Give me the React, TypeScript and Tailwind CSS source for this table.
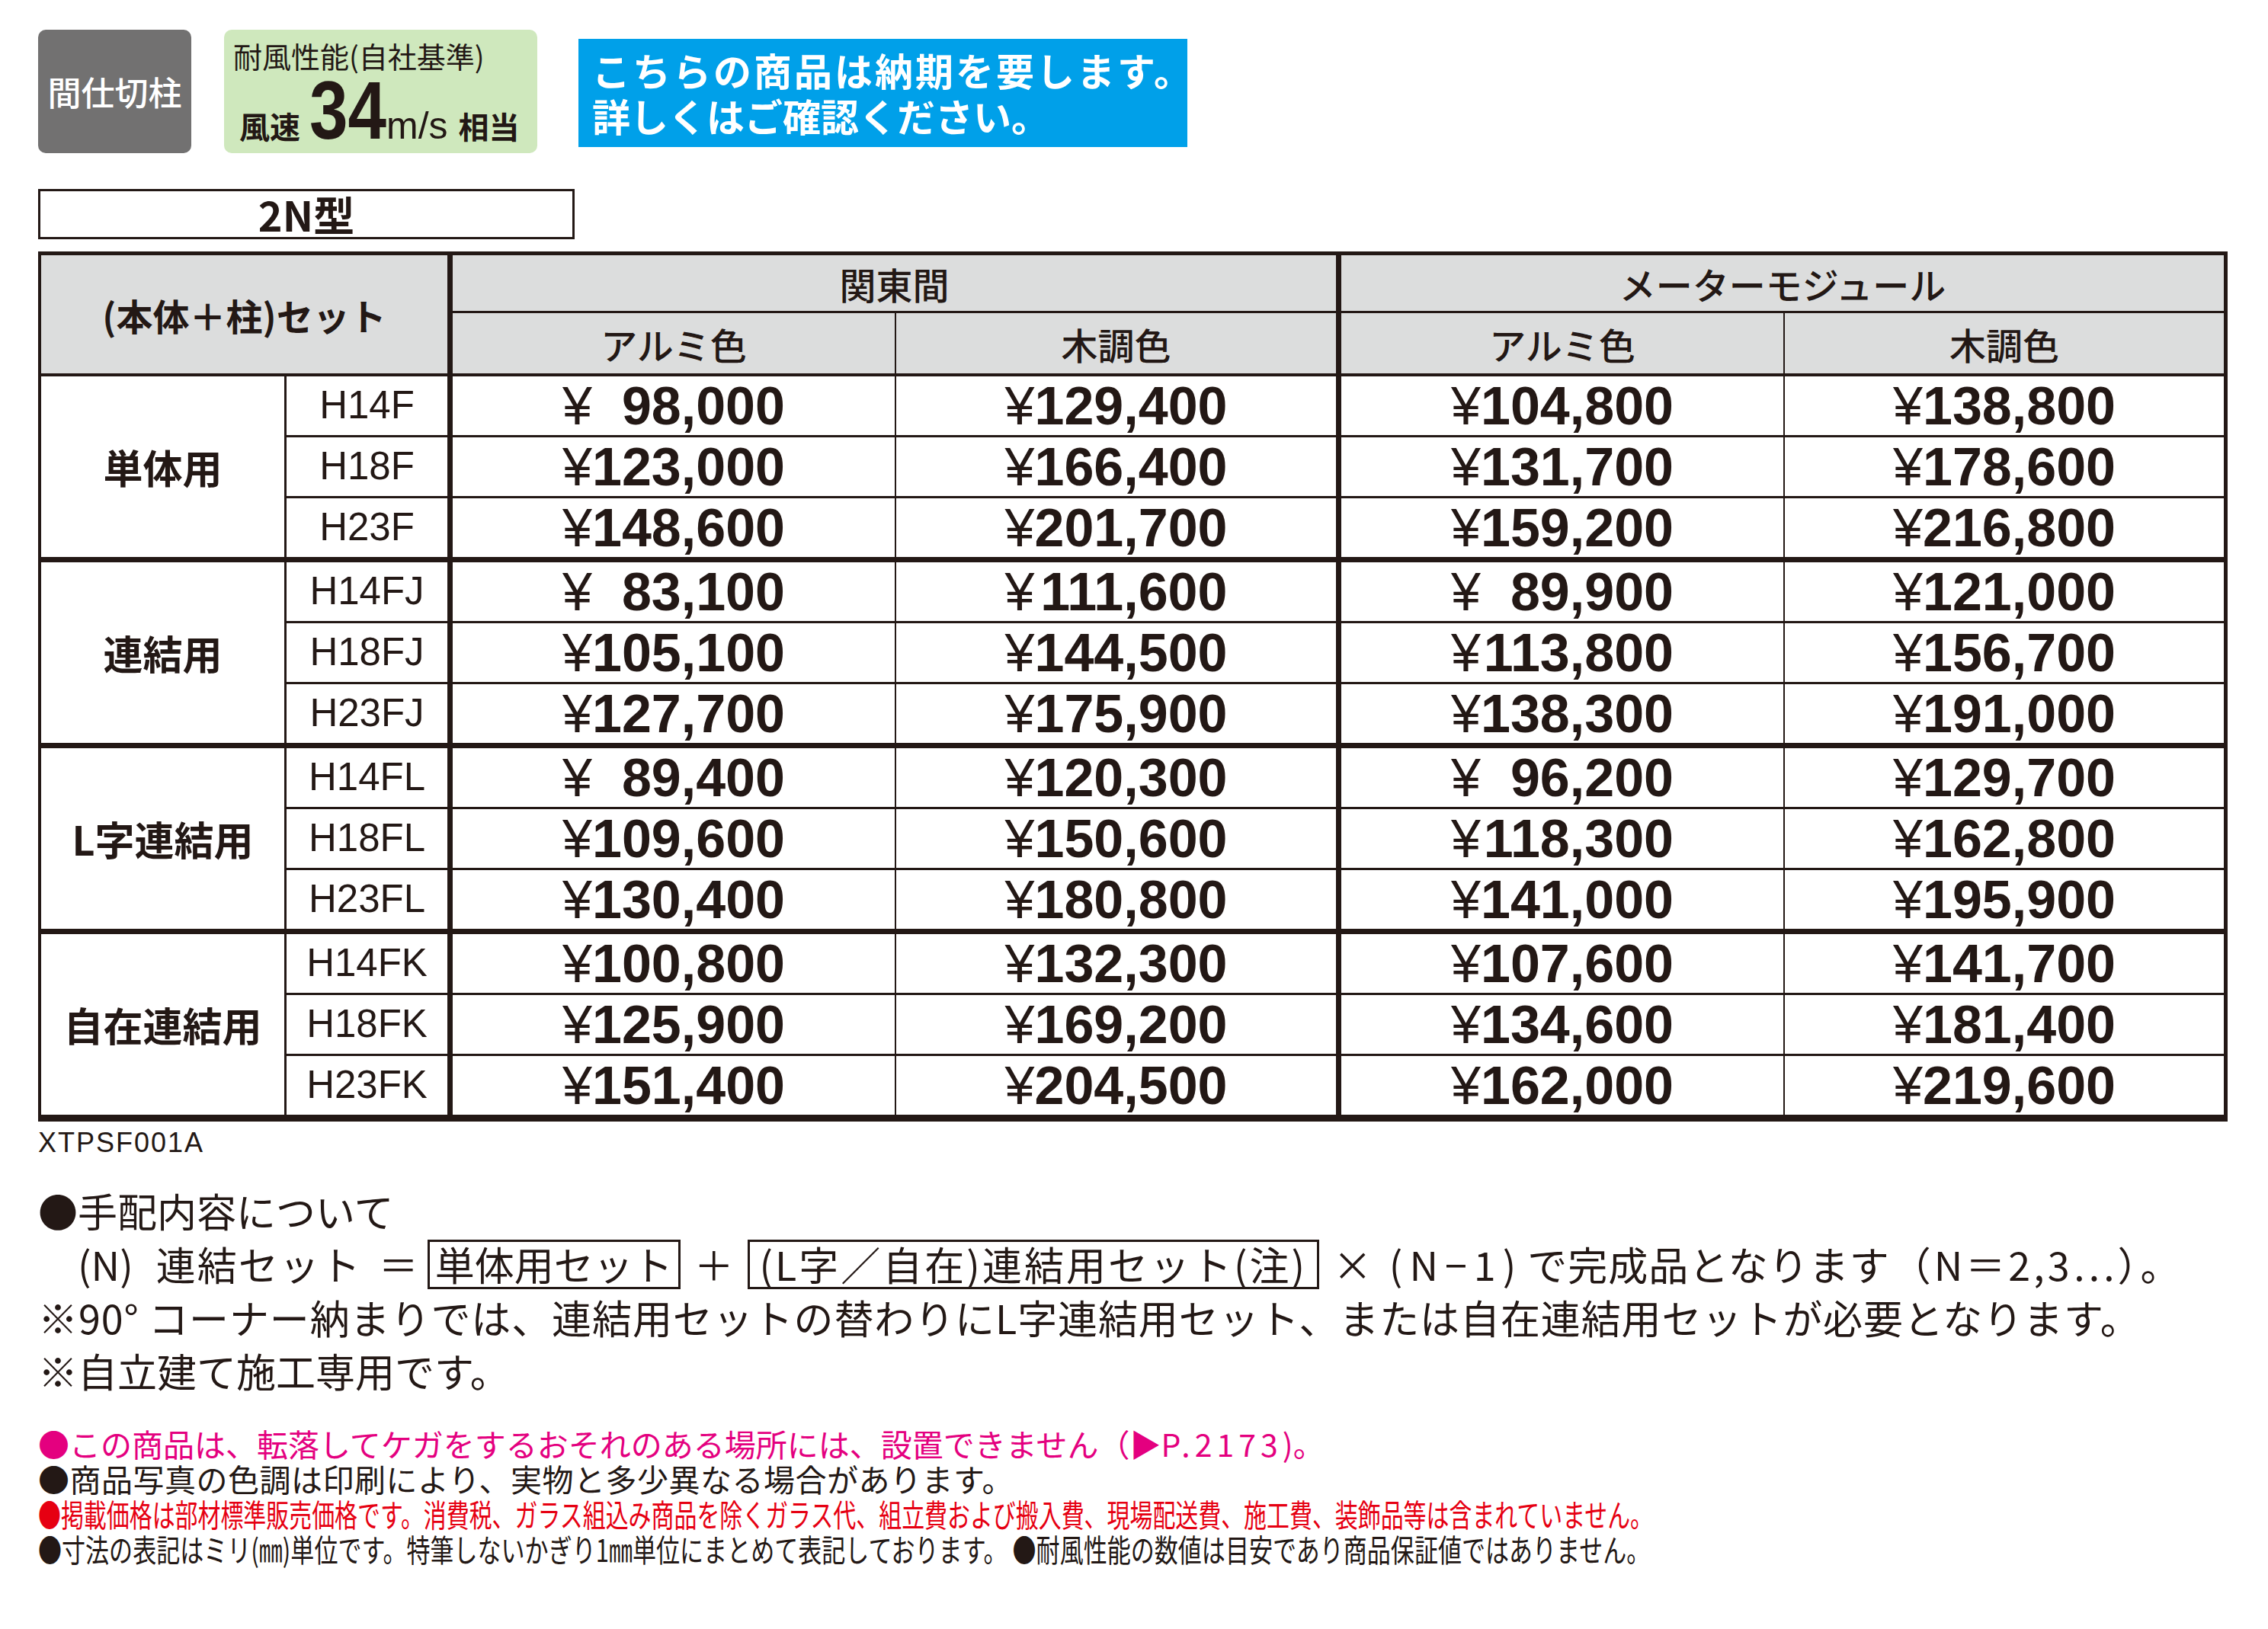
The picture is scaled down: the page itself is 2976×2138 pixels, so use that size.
import React from "react";

const groups = [
  {
    label: "単体用",
    rows: [
      ["H14F", "98,000", "129,400", "104,800", "138,800"],
      ["H18F", "123,000", "166,400", "131,700", "178,600"],
      ["H23F", "148,600", "201,700", "159,200", "216,800"],
    ],
  },
  {
    label: "連結用",
    rows: [
      ["H14FJ", "83,100", "111,600", "89,900", "121,000"],
      ["H18FJ", "105,100", "144,500", "113,800", "156,700"],
      ["H23FJ", "127,700", "175,900", "138,300", "191,000"],
    ],
  },
  {
    label: "L字連結用",
    rows: [
      ["H14FL", "89,400", "120,300", "96,200", "129,700"],
      ["H18FL", "109,600", "150,600", "118,300", "162,800"],
      ["H23FL", "130,400", "180,800", "141,000", "195,900"],
    ],
  },
  {
    label: "自在連結用",
    rows: [
      ["H14FK", "100,800", "132,300", "107,600", "141,700"],
      ["H18FK", "125,900", "169,200", "134,600", "181,400"],
      ["H23FK", "151,400", "204,500", "162,000", "219,600"],
    ],
  },
];

const priceRight = ["border-r-2", "border-r-[7px]", "border-r-2", "border-r-0"];
const cell = "border-solid border-[#231815] p-0 align-middle text-center";

function Price({ v }: { v: string }) {
  return (
    <div className="flex justify-center">
      <div className="flex items-baseline font-['Liberation_Sans',sans-serif] text-[70px] leading-none">
        <span className="font-normal">¥</span>
        <span className="w-[253px] text-right font-bold">{v}</span>
      </div>
    </div>
  );
}

function PriceTable() {
  return (
    <table className="mt-[16px] w-[2873px] table-fixed border-separate border-spacing-0 border-t-[5px] border-l-4 border-r-[5px] border-b-[9px] border-solid border-[#231815]">
      <colgroup>
        <col className="w-[322px]" />
        <col className="w-[218px]" />
        <col className="w-[582px]" />
        <col className="w-[584px]" />
        <col className="w-[582px]" />
        <col className="w-[576px]" />
      </colgroup>
      <thead>
        <tr className="h-[76px]">
          <th
            rowSpan={2}
            colSpan={2}
            className={`${cell} bg-[#dcdddd] border-r-[7px] border-b-4 text-[48px] font-bold`}
          >
            (本体＋柱)セット
          </th>
          <th colSpan={2} className={`${cell} bg-[#dcdddd] border-r-[7px] border-b-[3px] text-[48px] font-medium`}>
            関東間
          </th>
          <th colSpan={2} className={`${cell} bg-[#dcdddd] border-b-[3px] text-[48px] font-medium`}>
            メーターモジュール
          </th>
        </tr>
        <tr className="h-[83px]">
          <th className={`${cell} bg-[#dcdddd] border-r-2 border-b-4 text-[48px] font-medium`}>アルミ色</th>
          <th className={`${cell} bg-[#dcdddd] border-r-[7px] border-b-4 text-[48px] font-medium`}>木調色</th>
          <th className={`${cell} bg-[#dcdddd] border-r-2 border-b-4 text-[48px] font-medium`}>アルミ色</th>
          <th className={`${cell} bg-[#dcdddd] border-b-4 text-[48px] font-medium`}>木調色</th>
        </tr>
      </thead>
      <tbody>
        {groups.map((g, gi) =>
          g.rows.map((r, ri) => {
            const last = gi === groups.length - 1;
            const bottom =
              ri < 2 ? "border-b-[3px]" : last ? "border-b-0" : "border-b-[7px]";
            const height = ri < 2 ? "h-[80px]" : last ? "h-[77px]" : "h-[84px]";
            return (
              <tr key={r[0]} className={height}>
                {ri === 0 && (
                  <td
                    rowSpan={3}
                    className={`${cell} border-r-[3px] ${last ? "border-b-0" : "border-b-[7px]"} text-[52px] font-bold`}
                  >
                    {g.label}
                  </td>
                )}
                <td
                  className={`${cell} border-r-[7px] ${bottom} font-['Liberation_Sans',sans-serif] text-[51px]`}
                >
                  {r[0]}
                </td>
                {r.slice(1).map((v, i) => (
                  <td key={i} className={`${cell} ${priceRight[i]} ${bottom}`}>
                    <Price v={v} />
                  </td>
                ))}
              </tr>
            );
          })
        )}
      </tbody>
    </table>
  );
}

export default function App() {
  return (
    <div className="w-[2976px] h-[2138px] overflow-hidden bg-white pl-[50px] pt-[39px] text-[#231815] font-['Noto_Sans_CJK_JP',sans-serif]">
      <div className="flex items-start">
        <div className="flex h-[162px] w-[201px] items-center justify-center rounded-[10px] bg-[#727171] text-[44px] font-medium text-white">
          間仕切柱
        </div>
        <div className="ml-[43px] h-[162px] w-[411px] rounded-[10px] bg-[#cfe8bd] pt-[15px]">
          <div className="pl-[12px] text-[38px] leading-[38px]">耐風性能(自社基準)</div>
          <div className="flex items-baseline pl-[20px] leading-none">
            <span className="text-[40px] font-bold">風速</span>
            <span className="ml-[12px] mr-[-18px] origin-left scale-x-[0.85] font-['Liberation_Sans',sans-serif] text-[107px] font-bold">
              34
            </span>
            <span className="font-['Liberation_Sans',sans-serif] text-[50px]">m/s</span>
            <span className="ml-[14px] text-[40px] font-bold">相当</span>
          </div>
        </div>
        <div className="ml-[54px] mt-[12px] h-[142px] w-[799px] whitespace-nowrap bg-[#00a0e9] pl-[18px] pt-[10px] text-[50px] font-bold leading-[60px] text-white">
          <div className="tracking-[3px]">こちらの商品は納期を要します。</div>
          <div>詳しくはご確認ください。</div>
        </div>
      </div>

      <div className="mt-[47px] flex h-[66px] w-[704px] items-center justify-center border-[3px] border-solid border-[#231815] text-[54px] font-bold leading-none">
        2N型
      </div>

      <PriceTable />

      <div className="mt-[10px] font-['Liberation_Sans',sans-serif] text-[36px] leading-none tracking-[2px]">
        XTPSF001A
      </div>

      <div className="mt-[36px] text-[52px] leading-[70px] whitespace-nowrap">
        <div>●手配内容について</div>
        <div className="flex h-[70px] items-center">
          <span className="ml-[52px]">(N)</span>
          <span className="ml-[30px] tracking-[2px]">連結セット</span>
          <span className="ml-[22px]">＝</span>
          <span className="ml-[12px] flex h-[65px] w-[332px] items-center justify-center border-[3px] border-solid border-[#231815]">
            単体用セット
          </span>
          <span className="ml-[18px]">＋</span>
          <span className="ml-[18px] flex h-[65px] w-[750px] items-center justify-center border-[3px] border-solid border-[#231815] tracking-[3px]">
            (L字／自在)連結用セット(注)
          </span>
          <span className="ml-[18px]">×</span>
          <span className="ml-[22px] tracking-[9px]">(N−1)</span>
          <span className="ml-[6px] tracking-[1px]">で完成品となります</span>
          <span className="ml-[2px] tracking-[4px]">（N＝2,3…）。</span>
        </div>
        <div className="tracking-[0.9px]">
          ※90° コーナー納まりでは、連結用セットの替わりにL字連結用セット、または自在連結用セットが必要となります。
        </div>
        <div>※自立建て施工専用です。</div>
      </div>

      <div className="mt-[37px] text-[41px] leading-[46px] whitespace-nowrap">
        <div className="text-[#e4007f]">
          ●この商品は、転落してケガをするおそれのある場所には、設置できません（▶<span className="tracking-[6px]">P.2173</span>)。
        </div>
        <div className="tracking-[0.5px]">●商品写真の色調は印刷により、実物と多少異なる場合があります。</div>
        <div className="origin-left scale-x-[0.73] text-[#e60012]">
          ●掲載価格は部材標準販売価格です。消費税、ガラス組込み商品を除くガラス代、組立費および搬入費、現場配送費、施工費、装飾品等は含まれていません。
        </div>
        <div className="origin-left scale-x-[0.757]">
          ●寸法の表記はミリ(㎜)単位です。特筆しないかぎり1㎜単位にまとめて表記しております。 ●耐風性能の数値は目安であり商品保証値ではありません。
        </div>
      </div>
    </div>
  );
}
